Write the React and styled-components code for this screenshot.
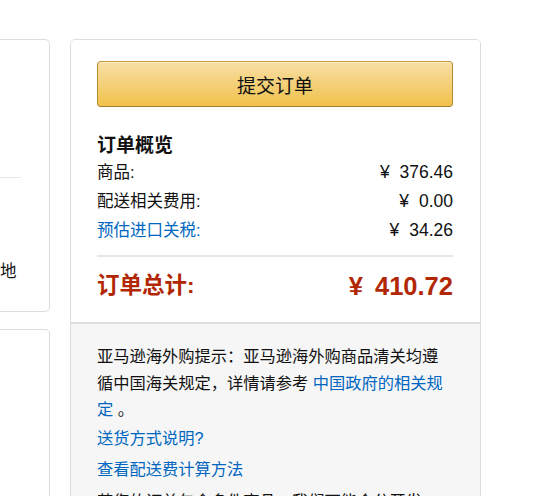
import React from "react";
import styled, { createGlobalStyle } from "styled-components";

const GlobalStyle = createGlobalStyle`
  html, body {
    margin: 0;
    padding: 0;
    background: #fff;
    overflow: hidden;
  }
  body {
    font-family: "Liberation Sans", Arial, "Noto Sans CJK SC", sans-serif;
    color: #111;
  }
`;

const Page = styled.div`
  display: flex;
  align-items: flex-start;
  gap: 20px;
  padding-top: 39px;
  height: 457px;
  overflow: hidden;
`;

const LeftColumn = styled.div`
  width: 50px;
  display: flex;
  flex-direction: column;
  gap: 17px;
  flex-shrink: 0;
`;

const SideCard = styled.div`
  box-sizing: border-box;
  height: ${(p) => p.$height}px;
  border: 1px solid #ddd;
  border-left: none;
  border-radius: 0 5px 5px 0;
  padding-right: 28px;
`;

const SideDivider = styled.div`
  height: 1px;
  background: #e7e7e7;
  margin-top: 137px;
`;

const SideText = styled.div`
  font-size: 16.5px;
  line-height: 24px;
  margin-top: 81px;
  white-space: nowrap;
`;

const Card = styled.div`
  width: 411px;
  box-sizing: border-box;
  border: 1px solid #ddd;
  border-radius: 5px;
  overflow: hidden;
  flex-shrink: 0;
`;

const Summary = styled.div`
  padding: 21px 27px 18px 26px;
  background: #fff;
`;

const SubmitButton = styled.button`
  display: block;
  width: 100%;
  height: 46px;
  box-sizing: border-box;
  border: 1px solid;
  border-color: #c89b3a #b68a2c #a8802a;
  border-radius: 4px;
  background: linear-gradient(to bottom, #f7dfa5, #f0c14b);
  box-shadow: inset 0 1px 0 rgba(255, 255, 255, 0.4);
  font-family: "Noto Sans CJK SC", sans-serif;
  font-size: 19px;
  color: #111;
  cursor: pointer;
  padding: 0;
`;

const Heading = styled.h3`
  margin: 22px 0 0;
  font-family: "Noto Sans CJK SC", sans-serif;
  font-size: 19px;
  font-weight: 700;
  line-height: 29px;
  color: #111;
`;

const Row = styled.div`
  display: flex;
  justify-content: space-between;
  align-items: center;
  font-size: 16.5px;
  line-height: 29px;
  color: #111;
`;

const RowLabel = styled.span`
  color: ${(p) => (p.$link ? "#0066c0" : "#111")};
`;

const Amount = styled.span`
  font-size: ${(p) => (p.$big ? 25.5 : 17.5)}px;
  white-space: nowrap;
`;

const Yen = styled.span`
  margin-right: 5px;
`;

const Divider = styled.div`
  height: 2px;
  background: #e7e7e7;
  margin: 10px 0 11px;
`;

const TotalRow = styled.div`
  display: flex;
  justify-content: space-between;
  align-items: center;
  font-size: 22.5px;
  font-weight: 700;
  line-height: 36px;
  color: #b12704;
`;

const Notes = styled.div`
  background: #f6f6f6;
  border-top: 2px solid #ddd;
  padding: 19px 27px 0 26px;
  font-size: 16.25px;
  color: #111;
`;

const NoteText = styled.p`
  margin: 0;
  line-height: 26.5px;
`;

const Link = styled.a`
  color: #0066c0;
  text-decoration: none;
`;

const NoteLink = styled.div`
  margin-top: ${(p) => p.$gap}px;
  line-height: 26px;
`;

export default function App() {
  return (
    <>
      <GlobalStyle />
      <Page>
        <LeftColumn>
          <SideCard $height={273}>
            <SideDivider />
            <SideText>地</SideText>
          </SideCard>
          <SideCard $height={200} />
        </LeftColumn>
        <Card>
          <Summary>
            <SubmitButton>提交订单</SubmitButton>
            <Heading>订单概览</Heading>
            <Row>
              <RowLabel>商品:</RowLabel>
              <Amount><Yen>¥</Yen> 376.46</Amount>
            </Row>
            <Row>
              <RowLabel>配送相关费用:</RowLabel>
              <Amount><Yen>¥</Yen> 0.00</Amount>
            </Row>
            <Row>
              <RowLabel $link>预估进口关税:</RowLabel>
              <Amount><Yen>¥</Yen> 34.26</Amount>
            </Row>
            <Divider />
            <TotalRow>
              <span>订单总计:</span>
              <Amount $big><Yen>¥</Yen> 410.72</Amount>
            </TotalRow>
          </Summary>
          <Notes>
            <NoteText>
              亚马逊海外购提示：亚马逊海外购商品清关均遵循中国海关规定，详情请参考{" "}
              <Link href="#">中国政府的相关规定</Link> 。
            </NoteText>
            <NoteLink $gap={2}>
              <Link href="#">送货方式说明?</Link>
            </NoteLink>
            <NoteLink $gap={5}>
              <Link href="#">查看配送费计算方法</Link>
            </NoteLink>
            <NoteLink $gap={6}>
              若您的订单包含多件商品，我们可能会分开发货。
            </NoteLink>
          </Notes>
        </Card>
      </Page>
    </>
  );
}
